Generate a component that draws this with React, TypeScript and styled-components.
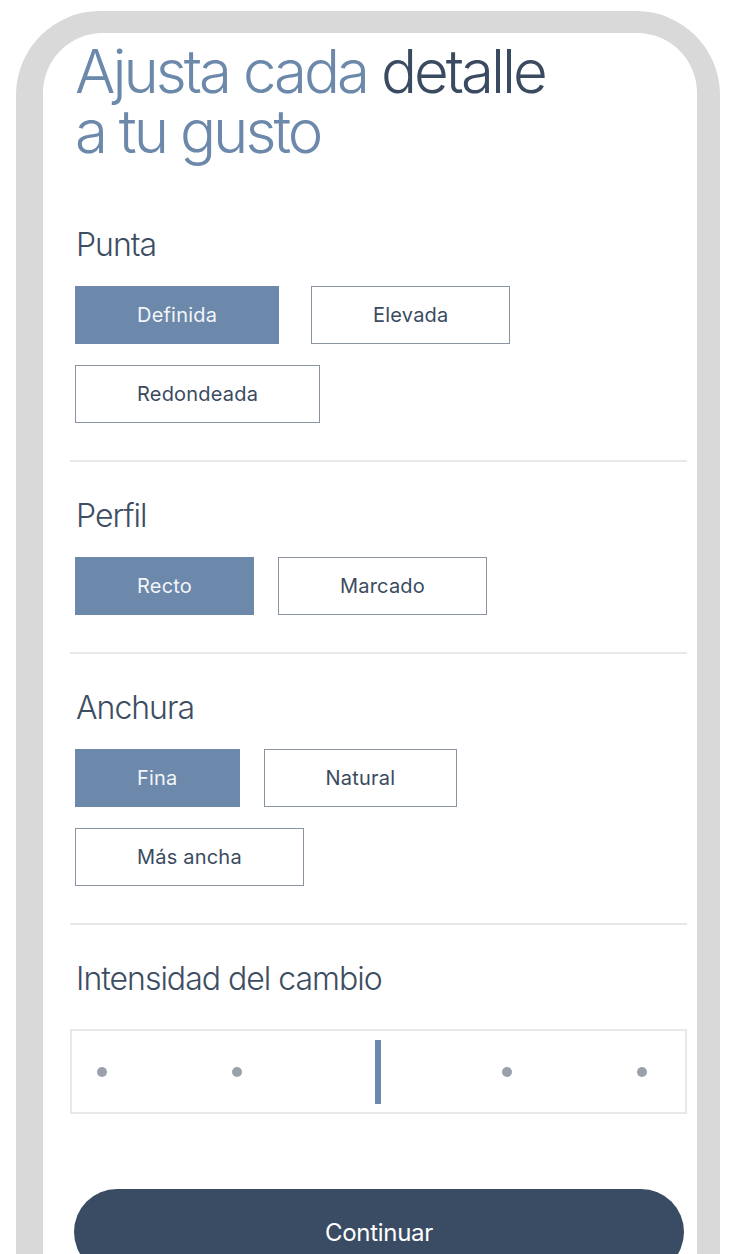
import React, { useState } from "react"
import styled, { createGlobalStyle } from "styled-components"

const GlobalStyle = createGlobalStyle`
    html, body {
        margin: 0;
        padding: 0;
        background: #ffffff;
        font-family: Inter, "Noto Sans", sans-serif;
        -webkit-font-smoothing: antialiased;
    }
`

const groups = [
    { title: "Punta", options: ["Definida", "Elevada", "Redondeada"], gap: 32 },
    { title: "Perfil", options: ["Recto", "Marcado"], gap: 24 },
    { title: "Anchura", options: ["Fina", "Natural", "Más ancha"], gap: 24 },
]

export default function App() {
    const [picked, setPicked] = useState<Record<string, string>>({
        Punta: "Definida",
        Perfil: "Recto",
        Anchura: "Fina",
    })
    const [level, setLevel] = useState(2)

    return (
        <>
            <GlobalStyle />
            <Frame>
                <Screen>
                    <Title>
                        Ajusta cada <Dark>detalle</Dark>
                        <br />
                        a tu gusto
                    </Title>

                    {groups.map((g) => (
                        <Section key={g.title}>
                            <Label>{g.title}</Label>
                            <Options $gap={g.gap}>
                                {g.options.map((o) => (
                                    <Option
                                        key={o}
                                        $active={picked[g.title] === o}
                                        onClick={() => setPicked({ ...picked, [g.title]: o })}
                                    >
                                        {o}
                                    </Option>
                                ))}
                            </Options>
                        </Section>
                    ))}

                    <Section $last>
                        <Label $wide>Intensidad del cambio</Label>
                        <Track>
                            {[0, 1, 2, 3, 4].map((i) => (
                                <Stop key={i} onClick={() => setLevel(i)}>
                                    {i === level ? <Bar /> : <Dot />}
                                </Stop>
                            ))}
                        </Track>
                    </Section>

                    <Continue>Continuar</Continue>
                </Screen>
            </Frame>
        </>
    )
}

const Frame = styled.div`
    box-sizing: border-box;
    width: 704px;
    height: 1243px;
    margin: 11px 0 0 16px;
    padding: 22px 23px 0 27px;
    background-color: #d9d9d9;
    border-radius: 84px 84px 0 0;
    overflow: hidden;
`

const Screen = styled.div`
    box-sizing: border-box;
    height: 100%;
    background-color: #ffffff;
    border-radius: 60px 60px 0 0;
    padding: 8px 10px 0 27px;
    display: flex;
    flex-direction: column;
`

const Title = styled.h1`
    margin: 0 0 0 5px;
    font-size: 60px;
    line-height: 60px;
    font-weight: 300;
    letter-spacing: -3px;
    color: #6c88aa;
`

const Dark = styled.span`
    color: #3a4b61;
`

const Section = styled.div<{ $last?: boolean }>`
    padding: ${(p) => (p.$last ? "34px 0 0" : "34px 0 37px")};
    border-bottom: ${(p) => (p.$last ? "none" : "2px solid #e8e8e8")};

    &:first-of-type {
        padding-top: 64px;
    }
`

const Label = styled.h2<{ $wide?: boolean }>`
    margin: 0 0 ${(p) => (p.$wide ? "30px" : "21px")} 6px;
    font-size: 32px;
    line-height: 40px;
    font-weight: 300;
    letter-spacing: -1px;
    color: #3d4d62;
`

const Options = styled.div<{ $gap: number }>`
    display: flex;
    flex-wrap: wrap;
    column-gap: ${(p) => p.$gap}px;
    row-gap: 21px;
    padding-left: 5px;
    padding-right: 100px;
`

const Option = styled.button<{ $active: boolean }>`
    box-sizing: border-box;
    height: 58px;
    padding: 0 61px;
    font-family: Inter, "Noto Sans", sans-serif;
    font-size: 20px;
    font-weight: 400;
    letter-spacing: 0.2px;
    cursor: pointer;
    border: 1px solid ${(p) => (p.$active ? "#6c88aa" : "#8a94a3")};
    background-color: ${(p) => (p.$active ? "#6c88aa" : "#ffffff")};
    color: ${(p) => (p.$active ? "#f2f5f9" : "#3a4b61")};
`

const Track = styled.div`
    box-sizing: border-box;
    height: 85px;
    border: 2px solid #e8e8e8;
    display: flex;
    align-items: center;
    justify-content: space-between;
    padding: 0 28px 0 15px;
`

const Stop = styled.div`
    width: 30px;
    height: 100%;
    display: flex;
    align-items: center;
    justify-content: center;
    cursor: pointer;
`

const Dot = styled.span`
    width: 10px;
    height: 10px;
    border-radius: 50%;
    background-color: #9aa1ac;
`

const Bar = styled.span`
    width: 6px;
    height: 64px;
    margin-left: 12px;
    background-color: #6c88aa;
`

const Continue = styled.button`
    box-sizing: border-box;
    margin: 75px 3px 0 4px;
    height: 86px;
    flex-shrink: 0;
    border: none;
    border-radius: 43px;
    background-color: #3a4c63;
    color: #ffffff;
    font-family: Inter, "Noto Sans", sans-serif;
    font-size: 24px;
    font-weight: 400;
    letter-spacing: -0.3px;
    cursor: pointer;
`
